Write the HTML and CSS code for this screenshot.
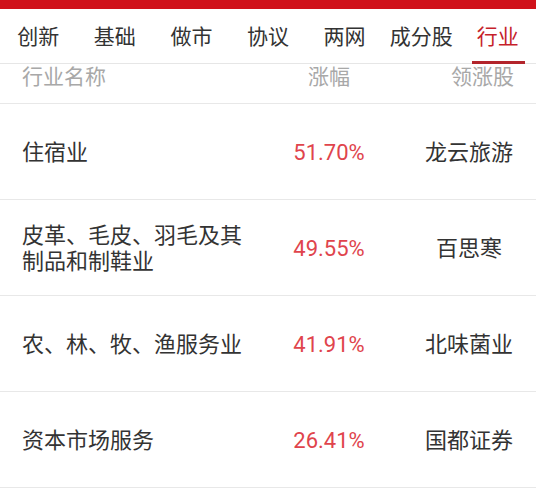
FILE: index.html
```html
<!DOCTYPE html>
<html lang="zh-CN">
<head>
<meta charset="utf-8">
<title>行业</title>
<link rel="stylesheet" href="styles.css">
</head>
<body>
<div class="topbar"></div>
<nav class="tabs">
  <div class="tab">创新</div>
  <div class="tab">基础</div>
  <div class="tab">做市</div>
  <div class="tab">协议</div>
  <div class="tab">两网</div>
  <div class="tab">成分股</div>
  <div class="tab active">行业</div>
</nav>
<div class="table">
  <div class="row head">
    <div class="name">行业名称</div>
    <div class="pct">涨幅</div>
    <div class="stock">领涨股</div>
  </div>
  <div class="row">
    <div class="name">住宿业</div>
    <div class="pct up">51.70%</div>
    <div class="stock">龙云旅游</div>
  </div>
  <div class="row">
    <div class="name">皮革、毛皮、羽毛及其<br>制品和制鞋业</div>
    <div class="pct up">49.55%</div>
    <div class="stock">百思寒</div>
  </div>
  <div class="row">
    <div class="name">农、林、牧、渔服务业</div>
    <div class="pct up">41.91%</div>
    <div class="stock">北味菌业</div>
  </div>
  <div class="row">
    <div class="name">资本市场服务</div>
    <div class="pct up">26.41%</div>
    <div class="stock">国都证券</div>
  </div>
</div>
</body>
</html>
```

FILE: styles.css
```css
html, body {
  margin: 0;
  padding: 0;
  background: #ffffff;
}
body {
  font-family: Roboto, "Noto Sans CJK SC", sans-serif;
  color: #333333;
  width: 536px;
  overflow: hidden;
}
.topbar {
  height: 9px;
  background: #d0121b;
}
.tabs {
  display: flex;
  height: 55px;
  padding-bottom: 2px;
  border-bottom: 1px solid #e6e6e6;
  box-sizing: border-box;
}
.tab {
  flex: 1;
  display: flex;
  align-items: center;
  justify-content: center;
  font-size: 21px;
  color: #333333;
  position: relative;
}
.tab.active {
  color: #c61f2b;
}
.tab.active::after {
  content: "";
  position: absolute;
  left: 50%;
  bottom: -3px;
  width: 53px;
  margin-left: -26px;
  height: 3px;
  background: #b3252c;
}
.row {
  display: grid;
  grid-template-columns: 1fr 118px 134px;
  column-gap: 14px;
  align-items: center;
  padding-left: 22px;
  padding-top: 2px;
  height: 96px;
  box-sizing: border-box;
  border-bottom: 1px solid #e8e8e8;
  font-size: 22px;
  line-height: 26px;
}
.row.head {
  height: 40px;
  align-items: start;
  padding-top: 1px;
  font-size: 21px;
  line-height: 24px;
  color: #a8a8a8;
}
.pct {
  text-align: center;
}
.stock {
  text-align: center;
}
.head .stock {
  text-align: right;
  padding-right: 22px;
}
.pct.up {
  color: #e0444c;
  font-size: 22px;
}
```
